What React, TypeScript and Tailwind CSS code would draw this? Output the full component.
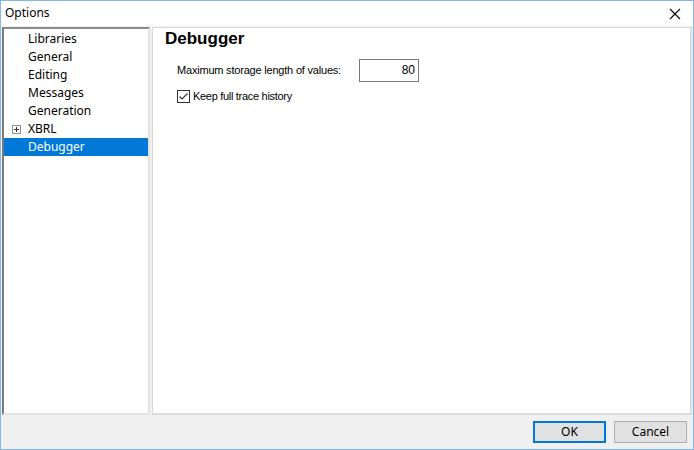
import React from "react";

const items = ["Libraries", "General", "Editing", "Messages", "Generation", "XBRL", "Debugger"];

export default function App() {
  return (
    <div
      className="w-[694px] h-[450px] border border-[#83b8ec] flex flex-col bg-[#f0f0f0] overflow-hidden"
      style={{ fontFamily: '"Noto Sans", "Open Sans", sans-serif' }}
    >
      <div className="h-[25px] bg-white flex items-center justify-between pl-[4px] pr-[8px] shrink-0">
        <span className="text-[12px] text-black -mt-[1px]">Options</span>
        <svg width="12" height="12" viewBox="0 0 12 12" className="mr-[4px]">
          <path d="M1 1 L11 11 M11 1 L1 11" stroke="#000" strokeWidth="1.1" />
        </svg>
      </div>
      <div className="flex h-[389px] pt-[1px] pl-[1px] pr-[1px] gap-[2px] shrink-0">
        <div className="w-[148px] h-full bg-white border-l-2 border-t-2 border-r-2 border-b-2 border-l-[#7a7a7a] border-t-[#8a8a8a] border-r-[#e3e3e3] border-b-[#e3e3e3] pt-[1px]">
          {items.map((it) => {
            const sel = it === "Debugger";
            return (
              <div
                key={it}
                className={`h-[18px] flex items-center text-[12px] ${sel ? "bg-[#0078d7] text-white" : "text-black"}`}
              >
                <div className="w-[24px] flex items-center justify-end pr-[7px]">
                  {it === "XBRL" && (
                    <svg width="9" height="9" viewBox="0 0 9 9">
                      <rect x="0.5" y="0.5" width="8" height="8" fill="#fff" stroke="#8f8f8f" />
                      <path d="M2 4.5 H7 M4.5 2 V7" stroke="#333" strokeWidth="1" />
                    </svg>
                  )}
                </div>
                <span>{it}</span>
              </div>
            );
          })}
        </div>
        <div className="flex-1 h-full bg-white border border-[#d9d9d9] border-r-2 border-b-2 border-r-[#dcdcdc] border-b-[#dcdcdc] pl-[12px]">
          <div
            className="text-[17px] font-bold text-black leading-[22px]"
            style={{ fontFamily: '"Liberation Sans", Arial, sans-serif' }}
          >
            Debugger
          </div>
          <div
            className="pl-[12px] mt-[9px] flex flex-col"
            style={{ fontFamily: '"Liberation Sans", Arial, sans-serif' }}
          >
            <div className="flex items-center h-[22px]">
              <span className="text-[11px] text-black w-[182px] whitespace-nowrap tracking-[-0.2px]">Maximum storage length of values:</span>
              <div className="w-[60px] h-[23px] border border-[#7a7a7a] bg-white flex items-center justify-end pr-[3px] text-[12px] text-black">
                80
              </div>
            </div>
            <div className="flex items-center mt-[8px] h-[14px]">
              <svg width="13" height="13" viewBox="0 0 13 13">
                <rect x="0.5" y="0.5" width="12" height="12" fill="#fff" stroke="#333" />
                <path d="M2.5 6.5 L5 9 L10.5 3.5" stroke="#333" strokeWidth="1.2" fill="none" />
              </svg>
              <span className="text-[11px] text-black ml-[3px] whitespace-nowrap tracking-[-0.3px]">Keep full trace history</span>
            </div>
          </div>
        </div>
      </div>
      <div className="flex-1 flex justify-end items-start pt-[6px] pr-[6px] gap-[8px]">
        <button className="w-[73px] h-[22px] bg-[#e1e1e1] border-2 border-[#0078d7] text-[12px] text-black flex items-center justify-center">
          OK
        </button>
        <button className="w-[73px] h-[22px] bg-[#e1e1e1] border border-[#adadad] text-[12px] text-black flex items-center justify-center">
          Cancel
        </button>
      </div>
    </div>
  );
}
